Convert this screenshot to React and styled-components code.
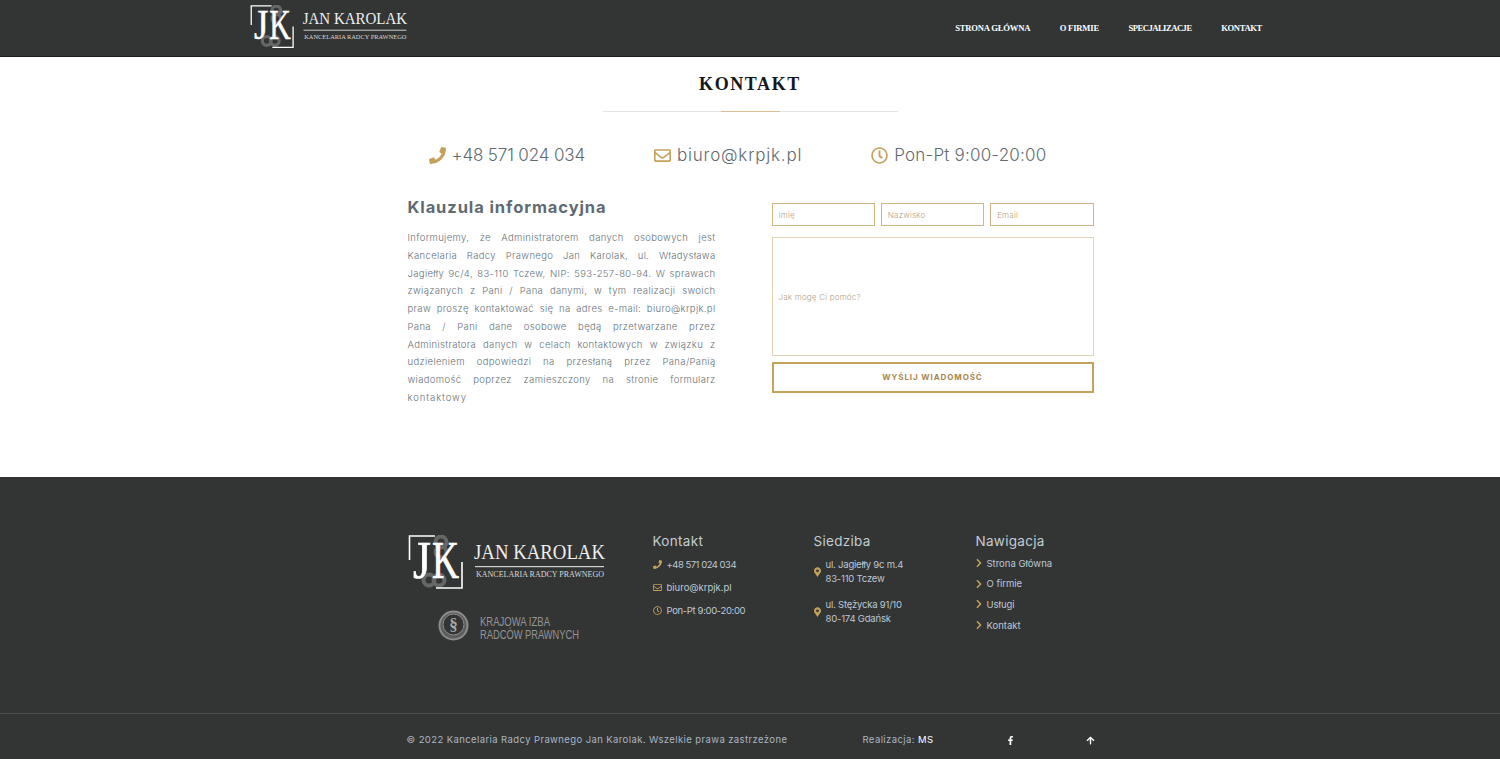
import React from 'react';
import styled, { createGlobalStyle } from 'styled-components';
import { FaPhone, FaRegEnvelope, FaRegClock, FaMapMarkerAlt, FaChevronRight, FaFacebookF, FaArrowUp } from 'react-icons/fa';

const GlobalStyle = createGlobalStyle`
  html, body {
    margin: 0;
    padding: 0;
    background: #fff;
    font-family: Inter, "Open Sans", sans-serif;
  }
  * { box-sizing: border-box; }
`;

const Header = styled.header`
  height: 57px;
  background: #333535;
  border-bottom: 1px solid #1d1d1d;
  display: flex;
  justify-content: space-between;
  align-items: flex-start;
  padding: 5px 238px 0 250px;
`;

const Nav = styled.nav`
  display: flex;
  gap: 29.5px;
  padding-top: 17px;
`;

const NavLink = styled.a`
  font-family: "Liberation Serif", serif;
  font-weight: 700;
  font-size: 8.6px;
  line-height: 12px;
  letter-spacing: ${(props) => props.$spacing}px;
  color: #fff;
  white-space: nowrap;
`;

const Main = styled.main`
  height: 420px;
  width: 687px;
  margin: 0 auto;
  padding-top: 15px;
`;

const Title = styled.h1`
  margin: 0;
  font-family: "Liberation Serif", serif;
  font-size: 18px;
  line-height: 24px;
  font-weight: 700;
  letter-spacing: 1.6px;
  text-align: center;
  color: #14181b;
`;

const Divider = styled.div`
  width: 295px;
  height: 1px;
  margin: 15px auto 0;
  background: linear-gradient(to right, #e4e4e2 0, #e4e4e2 118px, #d9bf94 118px, #d9bf94 177px, #e4e4e2 177px);
`;

const ContactRow = styled.div`
  display: flex;
  gap: 69px;
  margin-top: 31px;
  padding-left: 22px;
  height: 24px;
`;

const ContactItem = styled.div`
  display: flex;
  align-items: center;
  gap: 6px;
  font-size: 17px;
  font-weight: 300;
  letter-spacing: ${(props) => props.$spacing}px;
  color: #5f6b73;
  white-space: nowrap;
  svg {
    color: #c6a05a;
    font-size: 17px;
  }
`;

const Columns = styled.div`
  display: grid;
  grid-template-columns: 309px 322px;
  gap: 56px;
  margin-top: 30px;
`;

const ClauseTitle = styled.h2`
  margin: 0 0 12px;
  padding-left: 1px;
  font-size: 16.5px;
  line-height: 20px;
  font-weight: 700;
  letter-spacing: 0.9px;
  color: #5f6b73;
`;

const ClauseText = styled.div`
  padding-left: 1px;
  font-size: 9.5px;
  line-height: 17.75px;
  font-weight: 300;
  color: #66727a;
`;

const ClauseLine = styled.div`
  white-space: nowrap;
  text-align: ${(props) => (props.$last ? 'left' : 'justify')};
  text-align-last: ${(props) => (props.$last ? 'left' : 'justify')};
  letter-spacing: ${(props) => (props.$last ? 0.9 : 0.35)}px;
`;

const Form = styled.form`
  padding-top: 6px;
  display: flex;
  flex-direction: column;
`;

const InputRow = styled.div`
  display: grid;
  grid-template-columns: repeat(3, 1fr);
  gap: 6px;
`;

const Input = styled.input`
  height: 23px;
  min-width: 0;
  padding: 0 6px;
  border: 1px solid #d0b684;
  border-radius: 0;
  outline: none;
  background: #fff;
  font: 300 8px Inter, sans-serif;
  letter-spacing: 0.2px;
  &::placeholder { color: #b39f80; opacity: 1; }
`;

const Message = styled.textarea`
  height: 119px;
  margin-top: 11px;
  padding: 53px 6px 0;
  border: 1px solid #e2d3b8;
  border-radius: 0;
  outline: none;
  resize: none;
  background: #fff;
  font: 300 8px/12px Inter, sans-serif;
  letter-spacing: 0.2px;
  &::placeholder { color: #b39f80; opacity: 1; }
`;

const SendButton = styled.button`
  height: 31px;
  margin-top: 6px;
  padding: 0 0 1px;
  border: 2px solid #c6a25b;
  border-radius: 0;
  background: #fff;
  font: 700 8px Inter, sans-serif;
  letter-spacing: 0.9px;
  color: #a8874b;
`;

const Footer = styled.footer`
  background: #333535;
  height: 282px;
`;

const FooterMain = styled.div`
  height: 236px;
  width: 687px;
  margin: 0 auto;
  padding-top: 57px;
  display: grid;
  grid-template-columns: 245px 161px 162px 1fr;
  padding-left: 0;
  align-items: start;
`;

const LogoColumn = styled.div`
  display: flex;
  flex-direction: column;
  gap: 20px;
  padding: 1px 0 0 1px;
  svg { display: block; }
`;

const Seal = styled.div`
  margin-left: 30px;
`;

const FooterColumn = styled.div`
  padding-left: 1px;
`;

const FooterTitle = styled.h3`
  margin: 0 0 8px;
  font-size: 13.5px;
  line-height: 14px;
  font-weight: 400;
  letter-spacing: 0.3px;
  color: #c2ccd2;
`;

const FooterIconRow = styled.div`
  display: flex;
  align-items: center;
  gap: 5px;
  height: 16px;
  margin-bottom: 7px;
  font-size: 9.5px;
  font-weight: 400;
  letter-spacing: ${(props) => props.$spacing}px;
  color: #bcc8d4;
  white-space: nowrap;
  svg {
    color: #c6a05a;
    font-size: 9px;
  }
`;

const Address = styled.div`
  display: flex;
  align-items: center;
  gap: 5px;
  margin: 10px 0 12px;
  font-size: 9.5px;
  line-height: 14px;
  letter-spacing: -0.2px;
  color: #bcc8d4;
  white-space: nowrap;
  svg {
    color: #c6a05a;
    font-size: 10px;
    width: 7px;
  }
`;

const AddressBlock = styled.div`
  display: flex;
  flex-direction: column;
`;

const NavRow = styled.div`
  display: flex;
  align-items: center;
  gap: 5px;
  height: 20.6px;
  font-size: 9.5px;
  color: #bcc8d4;
  svg {
    color: #c6a05a;
    font-size: 10px;
    width: 6px;
  }
`;

const NavList = styled.div`
  margin-top: -3px;
`;

const FooterBottom = styled.div`
  border-top: 1px solid #4c4e4e;
  height: 46px;
`;

const BottomInner = styled.div`
  width: 687px;
  margin: 0 auto;
  padding-top: 19px;
  display: grid;
  grid-template-columns: 456px 143px 80px 1fr;
  align-items: center;
  font-size: 9.5px;
  line-height: 14px;
  letter-spacing: 0.4px;
  color: #aab6c2;
`;

const Strong = styled.span`
  color: #fff;
`;

const BottomIcon = styled.span`
  color: #fff;
  font-size: 9px;
  display: flex;
`;

function Logo({ width }) {
  return (
    <svg width={width} viewBox="0 0 198 55" height={(width * 55) / 198}>
      <g fill="none" stroke="#666" strokeWidth="4">
        <circle cx="33" cy="7" r="5.5" />
        <circle cx="33" cy="17" r="5.5" />
        <circle cx="21" cy="45" r="5.5" />
        <circle cx="31" cy="45" r="5.5" />
      </g>
      <path d="M27 1H1.5V25" fill="none" stroke="#fff" strokeWidth="1.6" />
      <path d="M54 27V53H28" fill="none" stroke="#fff" strokeWidth="1.6" />
      <text x="5" y="43" fontFamily="Liberation Serif, serif" fontSize="53" fill="#fff" stroke="#fff" strokeWidth="0.6" textLength="18" lengthAdjust="spacingAndGlyphs">J</text>
      <text x="24" y="43" fontFamily="Liberation Serif, serif" fontSize="53" fill="#fff" stroke="#fff" strokeWidth="0.6" textLength="27" lengthAdjust="spacingAndGlyphs">K</text>
      <text x="66" y="23.5" fontFamily="Liberation Serif, serif" fontSize="20" fill="#eee" textLength="131" lengthAdjust="spacingAndGlyphs">JAN KAROLAK</text>
      <rect x="67" y="31" width="129" height="1.2" fill="#cfcfcf" />
      <text x="68" y="42" fontFamily="Liberation Serif, serif" fontSize="8.6" fill="#d8d8d8" textLength="128" lengthAdjust="spacingAndGlyphs">KANCELARIA RADCY PRAWNEGO</text>
    </svg>
  );
}

function SealLogo() {
  return (
    <svg width="142" height="36" viewBox="0 0 142 36">
      <circle cx="15.5" cy="15.5" r="14" fill="#5c5c5c" stroke="#8b8b8b" strokeWidth="2" />
      <circle cx="15.5" cy="14.5" r="10.5" fill="#333535" stroke="#8b8b8b" strokeWidth="1" />
      <text x="15.5" y="20" textAnchor="middle" fontFamily="Liberation Serif, serif" fontSize="17" fontWeight="700" fill="#a8a8a8">§</text>
      <text x="42" y="16" fontFamily="Liberation Sans, sans-serif" fontSize="12" fill="#949494" textLength="70" lengthAdjust="spacingAndGlyphs">KRAJOWA IZBA</text>
      <text x="42" y="29" fontFamily="Liberation Sans, sans-serif" fontSize="12" fill="#949494" textLength="99" lengthAdjust="spacingAndGlyphs">RADCÓW PRAWNYCH</text>
    </svg>
  );
}

const navLinks = [
  { label: 'STRONA GŁÓWNA', spacing: -0.2 },
  { label: 'O FIRMIE', spacing: -0.2 },
  { label: 'SPECJALIZACJE', spacing: -0.5 },
  { label: 'KONTAKT', spacing: -0.35 },
];
const footerLinks = ['Strona Główna', 'O firmie', 'Usługi', 'Kontakt'];
const clauseLines = [
  'Informujemy, że Administratorem danych osobowych jest',
  'Kancelaria Radcy Prawnego Jan Karolak, ul. Władysława',
  'Jagiełły 9c/4, 83-110 Tczew, NIP: 593-257-80-94. W sprawach',
  'związanych z Pani / Pana danymi, w tym realizacji swoich',
  'praw proszę kontaktować się na adres e-mail: biuro@krpjk.pl',
  'Pana / Pani dane osobowe będą przetwarzane przez',
  'Administratora danych w celach kontaktowych w związku z',
  'udzieleniem odpowiedzi na przesłaną przez Pana/Panią',
  'wiadomość poprzez zamieszczony na stronie formularz',
  'kontaktowy',
];

export default function App() {
  return (
    <>
      <GlobalStyle />
      <Header>
        <Logo width={158} />
        <Nav>
          {navLinks.map((link) => (
            <NavLink key={link.label} $spacing={link.spacing}>{link.label}</NavLink>
          ))}
        </Nav>
      </Header>
      <Main>
        <Title>KONTAKT</Title>
        <Divider />
        <ContactRow>
          <ContactItem $spacing={-0.15}><FaPhone />+48 571 024 034</ContactItem>
          <ContactItem $spacing={0.8}><FaRegEnvelope />biuro@krpjk.pl</ContactItem>
          <ContactItem $spacing={0.2}><FaRegClock />Pon-Pt 9:00-20:00</ContactItem>
        </ContactRow>
        <Columns>
          <div>
            <ClauseTitle>Klauzula informacyjna</ClauseTitle>
            <ClauseText>
              {clauseLines.map((line, i) => (
                <ClauseLine key={line} $last={i === clauseLines.length - 1}>{line}</ClauseLine>
              ))}
            </ClauseText>
          </div>
          <Form>
            <InputRow>
              <Input placeholder="Imię" />
              <Input placeholder="Nazwisko" />
              <Input placeholder="Email" />
            </InputRow>
            <Message placeholder="Jak mogę Ci pomóc?" />
            <SendButton type="button">WYŚLIJ WIADOMOŚĆ</SendButton>
          </Form>
        </Columns>
      </Main>
      <Footer>
        <FooterMain>
          <LogoColumn>
            <Logo width={198} />
            <Seal><SealLogo /></Seal>
          </LogoColumn>
          <FooterColumn>
            <FooterTitle>Kontakt</FooterTitle>
            <FooterIconRow $spacing={-0.5}><FaPhone />+48 571 024 034</FooterIconRow>
            <FooterIconRow $spacing={0}><FaRegEnvelope />biuro@krpjk.pl</FooterIconRow>
            <FooterIconRow $spacing={-0.35}><FaRegClock />Pon-Pt 9:00-20:00</FooterIconRow>
          </FooterColumn>
          <FooterColumn>
            <FooterTitle>Siedziba</FooterTitle>
            <Address>
              <FaMapMarkerAlt />
              <AddressBlock><span>ul. Jagiełły 9c m.4</span><span>83-110 Tczew</span></AddressBlock>
            </Address>
            <Address>
              <FaMapMarkerAlt />
              <AddressBlock><span>ul. Stężycka 91/10</span><span>80-174 Gdańsk</span></AddressBlock>
            </Address>
          </FooterColumn>
          <FooterColumn>
            <FooterTitle>Nawigacja</FooterTitle>
            <NavList>
              {footerLinks.map((link) => (
                <NavRow key={link}><FaChevronRight />{link}</NavRow>
              ))}
            </NavList>
          </FooterColumn>
        </FooterMain>
        <FooterBottom>
          <BottomInner>
            <span>© 2022 Kancelaria Radcy Prawnego Jan Karolak. Wszelkie prawa zastrzeżone</span>
            <span>Realizacja: <Strong>MS</Strong></span>
            <BottomIcon><FaFacebookF /></BottomIcon>
            <BottomIcon><FaArrowUp /></BottomIcon>
          </BottomInner>
        </FooterBottom>
      </Footer>
    </>
  );
}
